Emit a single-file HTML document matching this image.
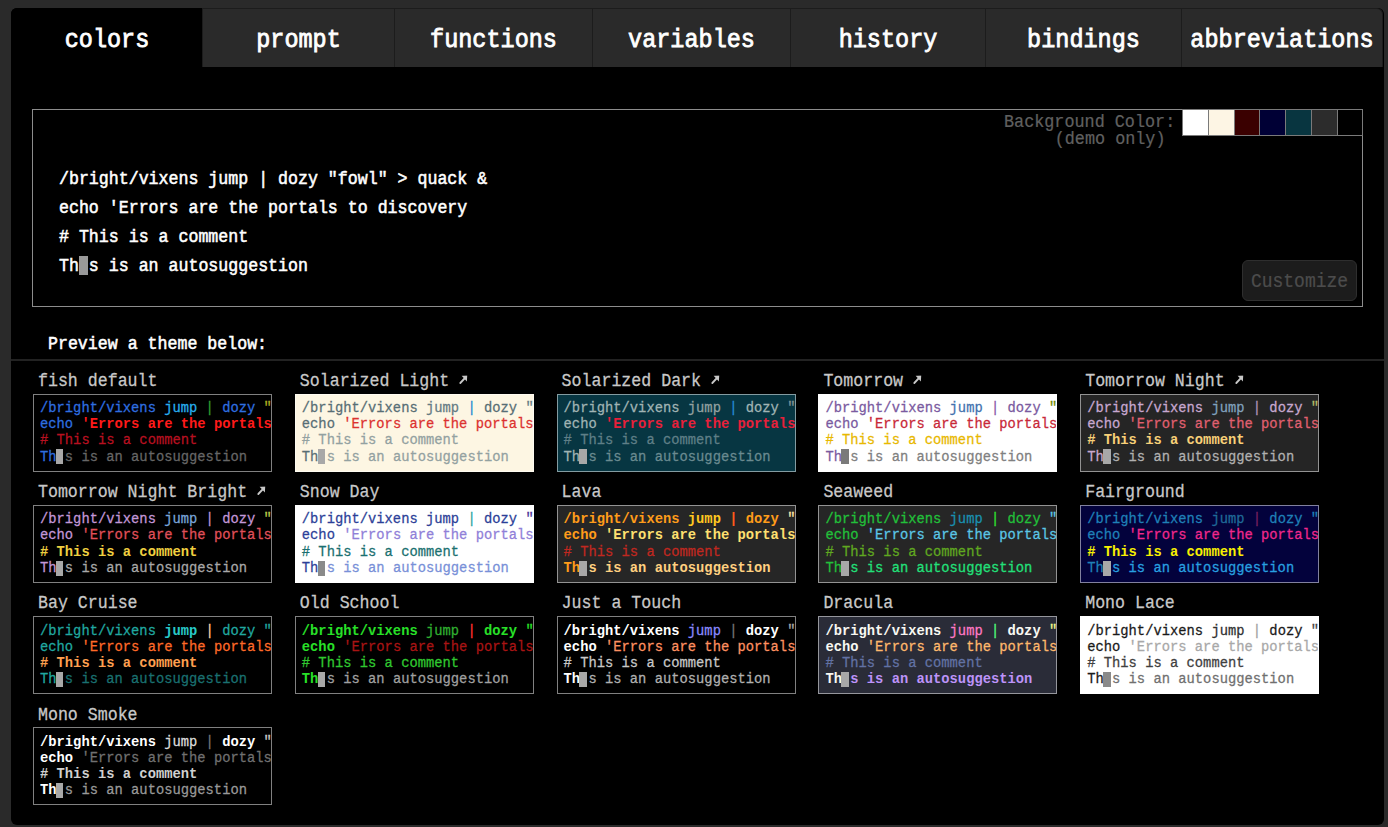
<!DOCTYPE html>
<html><head><meta charset="utf-8"><title>fish shell configuration</title>
<style>
html,body{margin:0;padding:0}
body{width:1388px;height:827px;overflow:hidden;background:#2a2a2a;position:relative;font-family:"Liberation Mono",monospace;color:#fff}
#cont{position:absolute;left:11px;top:8px;width:1373px;height:817px;background:#000;border-radius:6px}
.tab{position:absolute;top:8px;height:59px;box-sizing:border-box;background:#2a2a2a;border-left:1px solid #1c1c1c;border-top:1px solid #1c1c1c}
.tab.sel{background:#000;border-color:#000}
.tl{position:absolute;left:0;right:0;top:17.4px;line-height:30px;transform:scaleY(1.08);transform-origin:0 21.26px;text-align:center;font-size:23.5px;font-weight:normal;-webkit-text-stroke-width:0.75px;color:#fff;white-space:nowrap}
#demo{position:absolute;left:32px;top:109px;width:1331px;height:198px;box-sizing:border-box;border:1px solid #8c8c8c}
.dl{position:absolute;left:59px;font-size:16.6px;line-height:29px;transform:scaleY(1.08);transform-origin:0 18.92px;font-weight:normal;-webkit-text-stroke-width:0.5px;white-space:pre;color:#fff}
.cur{background:#999;color:transparent}
.bgl{position:absolute;font-size:16.8px;line-height:16.6px;transform:scaleY(1.08);transform-origin:0 12.7px;-webkit-text-stroke-width:0.2px;color:#606060;white-space:pre;text-align:right}
.sw{position:absolute;top:109px;height:27px;box-sizing:border-box;border:1px solid #7a7a7a}
#cust{position:absolute;left:1242px;top:260px;width:115px;height:41px;box-sizing:border-box;background:#1c1c1c;border:1px solid #2e2e2e;border-radius:6px}
#cust div{position:absolute;left:0;right:0;top:10.8px;line-height:20px;transform:scaleY(1.08);transform-origin:0 14.8px;-webkit-text-stroke-width:0.2px;font-size:18px;color:#4c4c4c;text-align:center}
#prev{position:absolute;left:48px;top:335.2px;font-size:16.6px;line-height:20px;transform:scaleY(1.08);transform-origin:0 14.42px;font-weight:normal;-webkit-text-stroke-width:0.5px;color:#fff;white-space:pre}
#hr{position:absolute;left:11px;top:359px;width:1373px;height:2px;background:#222}
.tt{position:absolute;font-size:16.6px;line-height:20px;transform:scaleY(1.08);transform-origin:0 14.42px;color:#c8c8c8;white-space:pre;-webkit-text-stroke-width:0.25px}
.bx{position:absolute;width:239px;height:78px;box-sizing:border-box;border:1px solid rgba(255,255,255,0.5);background-clip:border-box;overflow:hidden;padding:6.5px 0 0 6px}
.bcur{position:absolute;left:21.9px;top:54.9px;width:7.6px;height:15px;background:#a0a0a0}
.ln{font-size:13.8px;line-height:16.2px;white-space:pre;transform:scaleY(1.08);transform-origin:0 11.78px}
</style></head><body>
<div id="cont"></div>
<div class="tab sel" style="left:11px;width:191px;border-top-left-radius:6px;"><div class="tl">colors</div></div>
<div class="tab" style="left:202px;width:192px;"><div class="tl">prompt</div></div>
<div class="tab" style="left:394px;width:198px;"><div class="tl">functions</div></div>
<div class="tab" style="left:592px;width:198px;"><div class="tl">variables</div></div>
<div class="tab" style="left:790px;width:195px;"><div class="tl">history</div></div>
<div class="tab" style="left:985px;width:196px;"><div class="tl">bindings</div></div>
<div class="tab" style="left:1181px;width:202px;border-top-right-radius:6px;border-right:1px solid #1c1c1c;"><div class="tl">abbreviations</div></div>
<div id="demo"></div>
<div class="dl" style="top:165.2px">/bright/vixens jump | dozy "fowl" &gt; quack &amp;</div>
<div class="dl" style="top:194.1px">echo 'Errors are the portals to discovery</div>
<div class="dl" style="top:223.0px"># This is a comment</div>
<div class="dl" style="top:251.8px">Th s is an autosuggestion</div>
<div style="position:absolute;left:79.4px;top:255.5px;width:9px;height:19.5px;background:#999"></div>
<div class="bgl" style="right:212.8px;top:114.5px">Background Color:</div>
<div class="bgl" style="right:222.5px;top:131.9px">(demo only)</div>
<div class="sw" style="left:1182px;width:27px;background:#ffffff"></div><div class="sw" style="left:1208px;width:27px;background:#fdf5e4"></div><div class="sw" style="left:1234px;width:26px;background:#3a0000"></div><div class="sw" style="left:1259px;width:27px;background:#000035"></div><div class="sw" style="left:1285px;width:27px;background:#083540"></div><div class="sw" style="left:1311px;width:27px;background:#2c2c2c"></div><div class="sw" style="left:1337px;width:26px;background:#000000"></div>
<div id="cust"><div>Customize</div></div>
<div id="prev">Preview a theme below:</div>
<div id="hr"></div>
<div class="tt" style="left:38.0px;top:371.9px">fish default</div>
<div class="bx" style="left:33.0px;top:393.5px;background:#000"><div class="ln"><span style="color:#2f6fe0;-webkit-text-stroke-width:0.25px">/bright/vixens</span> <span style="color:#28b0f0;-webkit-text-stroke-width:0.25px">jump</span> <span style="color:#30a030;-webkit-text-stroke-width:0.25px">|</span> <span style="color:#2f6fe0;-webkit-text-stroke-width:0.25px">dozy</span> <span style="color:#b0b020;-webkit-text-stroke-width:0.25px">"fowl"</span> &gt; quack &amp;</div><div class="ln"><span style="color:#2f6fe0;-webkit-text-stroke-width:0.25px">echo</span> <span style="color:#ff1a1a;font-weight:bold">'Errors are the portals to discovery</span></div><div class="ln"><span style="color:#b81020;-webkit-text-stroke-width:0.25px"># This is a comment</span></div><div class="ln"><span style="color:#2f6fe0;-webkit-text-stroke-width:0.25px">Th</span> <span style="color:#666666;-webkit-text-stroke-width:0.25px">s is an autosuggestion</span></div><div class="bcur" style="background:#a8a8a8"></div></div>
<div class="tt" style="left:299.8px;top:371.9px">Solarized Light <svg width="10" height="10" viewBox="0 0 10 10" style="vertical-align:baseline"><path d="M1.3 7.3L6 2.6" stroke="#c8c8c8" stroke-width="1.8" stroke-linecap="round"/><path d="M2.6 0.5L8.2 0.2L7.9 5.8Z" fill="#c8c8c8"/></svg></div>
<div class="bx" style="left:294.8px;top:393.5px;background:#fdf6e3"><div class="ln"><span style="color:#586e75;-webkit-text-stroke-width:0.25px">/bright/vixens</span> <span style="color:#657b83;-webkit-text-stroke-width:0.25px">jump</span> <span style="color:#268bd2;-webkit-text-stroke-width:0.25px">|</span> <span style="color:#586e75;-webkit-text-stroke-width:0.25px">dozy</span> <span style="color:#657b83;-webkit-text-stroke-width:0.25px">"fowl"</span> &gt; quack &amp;</div><div class="ln"><span style="color:#586e75;-webkit-text-stroke-width:0.25px">echo</span> <span style="color:#dc322f;-webkit-text-stroke-width:0.25px">'Errors are the portals to discovery</span></div><div class="ln"><span style="color:#93a1a1;-webkit-text-stroke-width:0.25px"># This is a comment</span></div><div class="ln"><span style="color:#586e75;-webkit-text-stroke-width:0.25px">Th</span> <span style="color:#93a1a1;-webkit-text-stroke-width:0.25px">s is an autosuggestion</span></div><div class="bcur" style="background:#a8a8a8"></div></div>
<div class="tt" style="left:561.6px;top:371.9px">Solarized Dark <svg width="10" height="10" viewBox="0 0 10 10" style="vertical-align:baseline"><path d="M1.3 7.3L6 2.6" stroke="#c8c8c8" stroke-width="1.8" stroke-linecap="round"/><path d="M2.6 0.5L8.2 0.2L7.9 5.8Z" fill="#c8c8c8"/></svg></div>
<div class="bx" style="left:556.6px;top:393.5px;background:#073642"><div class="ln"><span style="color:#a0b4b4;-webkit-text-stroke-width:0.25px">/bright/vixens</span> <span style="color:#93a1a1;-webkit-text-stroke-width:0.25px">jump</span> <span style="color:#268bd2;-webkit-text-stroke-width:0.25px">|</span> <span style="color:#a0b4b4;-webkit-text-stroke-width:0.25px">dozy</span> <span style="color:#839496;-webkit-text-stroke-width:0.25px">"fowl"</span> &gt; quack &amp;</div><div class="ln"><span style="color:#a0b4b4;-webkit-text-stroke-width:0.25px">echo</span> <span style="color:#e8203a;font-weight:bold">'Errors are the portals to discovery</span></div><div class="ln"><span style="color:#5f7f87;-webkit-text-stroke-width:0.25px"># This is a comment</span></div><div class="ln"><span style="color:#a0b4b4;-webkit-text-stroke-width:0.25px">Th</span> <span style="color:#6a8a90;-webkit-text-stroke-width:0.25px">s is an autosuggestion</span></div><div class="bcur" style="background:#a8a8a8"></div></div>
<div class="tt" style="left:823.4000000000001px;top:371.9px">Tomorrow <svg width="10" height="10" viewBox="0 0 10 10" style="vertical-align:baseline"><path d="M1.3 7.3L6 2.6" stroke="#c8c8c8" stroke-width="1.8" stroke-linecap="round"/><path d="M2.6 0.5L8.2 0.2L7.9 5.8Z" fill="#c8c8c8"/></svg></div>
<div class="bx" style="left:818.4000000000001px;top:393.5px;background:#ffffff"><div class="ln"><span style="color:#7a5aa0;-webkit-text-stroke-width:0.25px">/bright/vixens</span> <span style="color:#4271ae;-webkit-text-stroke-width:0.25px">jump</span> <span style="color:#8959a8;-webkit-text-stroke-width:0.25px">|</span> <span style="color:#7a5aa0;-webkit-text-stroke-width:0.25px">dozy</span> <span style="color:#718c00;-webkit-text-stroke-width:0.25px">"fowl"</span> &gt; quack &amp;</div><div class="ln"><span style="color:#7a5aa0;-webkit-text-stroke-width:0.25px">echo</span> <span style="color:#c82838;-webkit-text-stroke-width:0.25px">'Errors are the portals to discovery</span></div><div class="ln"><span style="color:#e8b800;-webkit-text-stroke-width:0.25px"># This is a comment</span></div><div class="ln"><span style="color:#7a5aa0;-webkit-text-stroke-width:0.25px">Th</span> <span style="color:#808080;-webkit-text-stroke-width:0.25px">s is an autosuggestion</span></div><div class="bcur" style="background:#7a7a7a"></div></div>
<div class="tt" style="left:1085.2px;top:371.9px">Tomorrow Night <svg width="10" height="10" viewBox="0 0 10 10" style="vertical-align:baseline"><path d="M1.3 7.3L6 2.6" stroke="#c8c8c8" stroke-width="1.8" stroke-linecap="round"/><path d="M2.6 0.5L8.2 0.2L7.9 5.8Z" fill="#c8c8c8"/></svg></div>
<div class="bx" style="left:1080.2px;top:393.5px;background:#252525"><div class="ln"><span style="color:#c8a8d0;-webkit-text-stroke-width:0.25px">/bright/vixens</span> <span style="color:#81a2be;-webkit-text-stroke-width:0.25px">jump</span> <span style="color:#b294bb;-webkit-text-stroke-width:0.25px">|</span> <span style="color:#c8a8d0;-webkit-text-stroke-width:0.25px">dozy</span> <span style="color:#b5bd68;-webkit-text-stroke-width:0.25px">"fowl"</span> &gt; quack &amp;</div><div class="ln"><span style="color:#c8a8d0;-webkit-text-stroke-width:0.25px">echo</span> <span style="color:#e06070;-webkit-text-stroke-width:0.25px">'Errors are the portals to discovery</span></div><div class="ln"><span style="color:#f8d078;font-weight:bold"># This is a comment</span></div><div class="ln"><span style="color:#c8a8d0;-webkit-text-stroke-width:0.25px">Th</span> <span style="color:#b0b0b0;-webkit-text-stroke-width:0.25px">s is an autosuggestion</span></div><div class="bcur" style="background:#a8a8a8"></div></div>
<div class="tt" style="left:38.0px;top:483.15px">Tomorrow Night Bright <svg width="10" height="10" viewBox="0 0 10 10" style="vertical-align:baseline"><path d="M1.3 7.3L6 2.6" stroke="#c8c8c8" stroke-width="1.8" stroke-linecap="round"/><path d="M2.6 0.5L8.2 0.2L7.9 5.8Z" fill="#c8c8c8"/></svg></div>
<div class="bx" style="left:33.0px;top:504.75px;background:#000000"><div class="ln"><span style="color:#c397d8;-webkit-text-stroke-width:0.25px">/bright/vixens</span> <span style="color:#7aa6da;-webkit-text-stroke-width:0.25px">jump</span> <span style="color:#c397d8;-webkit-text-stroke-width:0.25px">|</span> <span style="color:#c397d8;-webkit-text-stroke-width:0.25px">dozy</span> <span style="color:#b9ca4a;-webkit-text-stroke-width:0.25px">"fowl"</span> &gt; quack &amp;</div><div class="ln"><span style="color:#c397d8;-webkit-text-stroke-width:0.25px">echo</span> <span style="color:#e0505a;-webkit-text-stroke-width:0.25px">'Errors are the portals to discovery</span></div><div class="ln"><span style="color:#f0d040;font-weight:bold"># This is a comment</span></div><div class="ln"><span style="color:#c397d8;-webkit-text-stroke-width:0.25px">Th</span> <span style="color:#a8a8a8;-webkit-text-stroke-width:0.25px">s is an autosuggestion</span></div><div class="bcur" style="background:#a8a8a8"></div></div>
<div class="tt" style="left:299.8px;top:483.15px">Snow Day</div>
<div class="bx" style="left:294.8px;top:504.75px;background:#ffffff"><div class="ln"><span style="color:#2c3f98;-webkit-text-stroke-width:0.25px">/bright/vixens</span> <span style="color:#2c3f98;-webkit-text-stroke-width:0.25px">jump</span> <span style="color:#2ea4a1;-webkit-text-stroke-width:0.25px">|</span> <span style="color:#2c3f98;-webkit-text-stroke-width:0.25px">dozy</span> <span style="color:#4c3499;-webkit-text-stroke-width:0.25px">"fowl"</span> &gt; quack &amp;</div><div class="ln"><span style="color:#2c3f98;-webkit-text-stroke-width:0.25px">echo</span> <span style="color:#9080d8;-webkit-text-stroke-width:0.25px">'Errors are the portals to discovery</span></div><div class="ln"><span style="color:#1a7070;-webkit-text-stroke-width:0.25px"># This is a comment</span></div><div class="ln"><span style="color:#2c3f98;-webkit-text-stroke-width:0.25px">Th</span> <span style="color:#7890d8;-webkit-text-stroke-width:0.25px">s is an autosuggestion</span></div><div class="bcur" style="background:#8a8a8a"></div></div>
<div class="tt" style="left:561.6px;top:483.15px">Lava</div>
<div class="bx" style="left:556.6px;top:504.75px;background:#262626"><div class="ln"><span style="color:#ff9c1a;font-weight:bold">/bright/vixens</span> <span style="color:#ffc820;font-weight:bold">jump</span> <span style="color:#ff5a1a;font-weight:bold">|</span> <span style="color:#ff9c1a;font-weight:bold">dozy</span> <span style="color:#ffe6a6;-webkit-text-stroke-width:0.25px">"fowl"</span> &gt; quack &amp;</div><div class="ln"><span style="color:#ff9c1a;font-weight:bold">echo</span> <span style="color:#ffe070;font-weight:bold">'Errors are the portals to discovery</span></div><div class="ln"><span style="color:#c02820;-webkit-text-stroke-width:0.25px"># This is a comment</span></div><div class="ln"><span style="color:#ff9c1a;font-weight:bold">Th</span> <span style="color:#ffd080;font-weight:bold">s is an autosuggestion</span></div><div class="bcur" style="background:#a8a8a8"></div></div>
<div class="tt" style="left:823.4000000000001px;top:483.15px">Seaweed</div>
<div class="bx" style="left:818.4000000000001px;top:504.75px;background:#262626"><div class="ln"><span style="color:#22c03a;-webkit-text-stroke-width:0.25px">/bright/vixens</span> <span style="color:#1a90b0;-webkit-text-stroke-width:0.25px">jump</span> <span style="color:#30e030;-webkit-text-stroke-width:0.25px">|</span> <span style="color:#22c03a;-webkit-text-stroke-width:0.25px">dozy</span> <span style="color:#5bc6e6;-webkit-text-stroke-width:0.25px">"fowl"</span> &gt; quack &amp;</div><div class="ln"><span style="color:#22c03a;-webkit-text-stroke-width:0.25px">echo</span> <span style="color:#5bc6e6;-webkit-text-stroke-width:0.25px">'Errors are the portals to discovery</span></div><div class="ln"><span style="color:#60a820;-webkit-text-stroke-width:0.25px"># This is a comment</span></div><div class="ln"><span style="color:#22c03a;-webkit-text-stroke-width:0.25px">Th</span> <span style="color:#22e07a;-webkit-text-stroke-width:0.25px">s is an autosuggestion</span></div><div class="bcur" style="background:#a8a8a8"></div></div>
<div class="tt" style="left:1085.2px;top:483.15px">Fairground</div>
<div class="bx" style="left:1080.2px;top:504.75px;background:#03023c"><div class="ln"><span style="color:#1f80b8;-webkit-text-stroke-width:0.25px">/bright/vixens</span> <span style="color:#1f6a98;-webkit-text-stroke-width:0.25px">jump</span> <span style="color:#7a2060;-webkit-text-stroke-width:0.25px">|</span> <span style="color:#1f80b8;-webkit-text-stroke-width:0.25px">dozy</span> <span style="color:#1f80b8;-webkit-text-stroke-width:0.25px">"fowl"</span> &gt; quack &amp;</div><div class="ln"><span style="color:#1f80b8;-webkit-text-stroke-width:0.25px">echo</span> <span style="color:#f0288c;-webkit-text-stroke-width:0.25px">'Errors are the portals to discovery</span></div><div class="ln"><span style="color:#f8f000;font-weight:bold"># This is a comment</span></div><div class="ln"><span style="color:#1f80b8;-webkit-text-stroke-width:0.25px">Th</span> <span style="color:#28a0e0;-webkit-text-stroke-width:0.25px">s is an autosuggestion</span></div><div class="bcur" style="background:#a8a8a8"></div></div>
<div class="tt" style="left:38.0px;top:594.4px">Bay Cruise</div>
<div class="bx" style="left:33.0px;top:616.0px;background:#000000"><div class="ln"><span style="color:#20a8a0;-webkit-text-stroke-width:0.25px">/bright/vixens</span> <span style="color:#28c8c8;font-weight:bold">jump</span> <span style="color:#ffd0a0;-webkit-text-stroke-width:0.25px">|</span> <span style="color:#20a8a0;-webkit-text-stroke-width:0.25px">dozy</span> <span style="color:#20a8a0;-webkit-text-stroke-width:0.25px">"fowl"</span> &gt; quack &amp;</div><div class="ln"><span style="color:#20a8a0;-webkit-text-stroke-width:0.25px">echo</span> <span style="color:#ff6a28;-webkit-text-stroke-width:0.25px">'Errors are the portals to discovery</span></div><div class="ln"><span style="color:#ffa050;font-weight:bold"># This is a comment</span></div><div class="ln"><span style="color:#20a8a0;-webkit-text-stroke-width:0.25px">Th</span> <span style="color:#1a7070;-webkit-text-stroke-width:0.25px">s is an autosuggestion</span></div><div class="bcur" style="background:#a8a8a8"></div></div>
<div class="tt" style="left:299.8px;top:594.4px">Old School</div>
<div class="bx" style="left:294.8px;top:616.0px;background:#000000"><div class="ln"><span style="color:#28e028;font-weight:bold">/bright/vixens</span> <span style="color:#30b030;-webkit-text-stroke-width:0.25px">jump</span> <span style="color:#ff3030;-webkit-text-stroke-width:0.25px">|</span> <span style="color:#28e028;font-weight:bold">dozy</span> <span style="color:#28e028;-webkit-text-stroke-width:0.25px">"fowl"</span> &gt; quack &amp;</div><div class="ln"><span style="color:#28e028;font-weight:bold">echo</span> <span style="color:#a81414;-webkit-text-stroke-width:0.25px">'Errors are the portals to discovery</span></div><div class="ln"><span style="color:#30c830;-webkit-text-stroke-width:0.25px"># This is a comment</span></div><div class="ln"><span style="color:#28e028;font-weight:bold">Th</span> <span style="color:#a0a0a0;-webkit-text-stroke-width:0.25px">s is an autosuggestion</span></div><div class="bcur" style="background:#a8a8a8"></div></div>
<div class="tt" style="left:561.6px;top:594.4px">Just a Touch</div>
<div class="bx" style="left:556.6px;top:616.0px;background:#000000"><div class="ln"><span style="color:#ffffff;font-weight:bold">/bright/vixens</span> <span style="color:#8a8aff;-webkit-text-stroke-width:0.25px">jump</span> <span style="color:#777777;-webkit-text-stroke-width:0.25px">|</span> <span style="color:#ffffff;font-weight:bold">dozy</span> <span style="color:#aaaaaa;-webkit-text-stroke-width:0.25px">"fowl"</span> &gt; quack &amp;</div><div class="ln"><span style="color:#ffffff;font-weight:bold">echo</span> <span style="color:#ff9060;-webkit-text-stroke-width:0.25px">'Errors are the portals to discovery</span></div><div class="ln"><span style="color:#c8c8c8;-webkit-text-stroke-width:0.25px"># This is a comment</span></div><div class="ln"><span style="color:#ffffff;font-weight:bold">Th</span> <span style="color:#b0b0b0;-webkit-text-stroke-width:0.25px">s is an autosuggestion</span></div><div class="bcur" style="background:#a8a8a8"></div></div>
<div class="tt" style="left:823.4000000000001px;top:594.4px">Dracula</div>
<div class="bx" style="left:818.4000000000001px;top:616.0px;background:#2a2c38"><div class="ln"><span style="color:#f8f8f2;font-weight:bold">/bright/vixens</span> <span style="color:#ff79c6;-webkit-text-stroke-width:0.25px">jump</span> <span style="color:#50fa7b;-webkit-text-stroke-width:0.25px">|</span> <span style="color:#f8f8f2;font-weight:bold">dozy</span> <span style="color:#f1fa8c;-webkit-text-stroke-width:0.25px">"fowl"</span> &gt; quack &amp;</div><div class="ln"><span style="color:#f8f8f2;font-weight:bold">echo</span> <span style="color:#ffb86c;-webkit-text-stroke-width:0.25px">'Errors are the portals to discovery</span></div><div class="ln"><span style="color:#6272a4;-webkit-text-stroke-width:0.25px"># This is a comment</span></div><div class="ln"><span style="color:#f8f8f2;font-weight:bold">Th</span> <span style="color:#bd93f9;font-weight:bold">s is an autosuggestion</span></div><div class="bcur" style="background:#a8a8a8"></div></div>
<div class="tt" style="left:1085.2px;top:594.4px">Mono Lace</div>
<div class="bx" style="left:1080.2px;top:616.0px;background:#ffffff"><div class="ln"><span style="color:#1a1a1a;-webkit-text-stroke-width:0.25px">/bright/vixens</span> <span style="color:#303030;-webkit-text-stroke-width:0.25px">jump</span> <span style="color:#a0a0a0;-webkit-text-stroke-width:0.25px">|</span> <span style="color:#1a1a1a;-webkit-text-stroke-width:0.25px">dozy</span> <span style="color:#444444;-webkit-text-stroke-width:0.25px">"fowl"</span> &gt; quack &amp;</div><div class="ln"><span style="color:#1a1a1a;-webkit-text-stroke-width:0.25px">echo</span> <span style="color:#a8a8a8;-webkit-text-stroke-width:0.25px">'Errors are the portals to discovery</span></div><div class="ln"><span style="color:#404040;-webkit-text-stroke-width:0.25px"># This is a comment</span></div><div class="ln"><span style="color:#1a1a1a;-webkit-text-stroke-width:0.25px">Th</span> <span style="color:#707070;-webkit-text-stroke-width:0.25px">s is an autosuggestion</span></div><div class="bcur" style="background:#8a8a8a"></div></div>
<div class="tt" style="left:38.0px;top:705.65px">Mono Smoke</div>
<div class="bx" style="left:33.0px;top:727.25px;background:#000000"><div class="ln"><span style="color:#ffffff;font-weight:bold">/bright/vixens</span> <span style="color:#dddddd;-webkit-text-stroke-width:0.25px">jump</span> <span style="color:#777777;-webkit-text-stroke-width:0.25px">|</span> <span style="color:#ffffff;font-weight:bold">dozy</span> <span style="color:#cccccc;-webkit-text-stroke-width:0.25px">"fowl"</span> &gt; quack &amp;</div><div class="ln"><span style="color:#ffffff;font-weight:bold">echo</span> <span style="color:#707070;-webkit-text-stroke-width:0.25px">'Errors are the portals to discovery</span></div><div class="ln"><span style="color:#d0d0d0;font-weight:bold"># This is a comment</span></div><div class="ln"><span style="color:#ffffff;font-weight:bold">Th</span> <span style="color:#999999;-webkit-text-stroke-width:0.25px">s is an autosuggestion</span></div><div class="bcur" style="background:#a8a8a8"></div></div>
</body></html>
